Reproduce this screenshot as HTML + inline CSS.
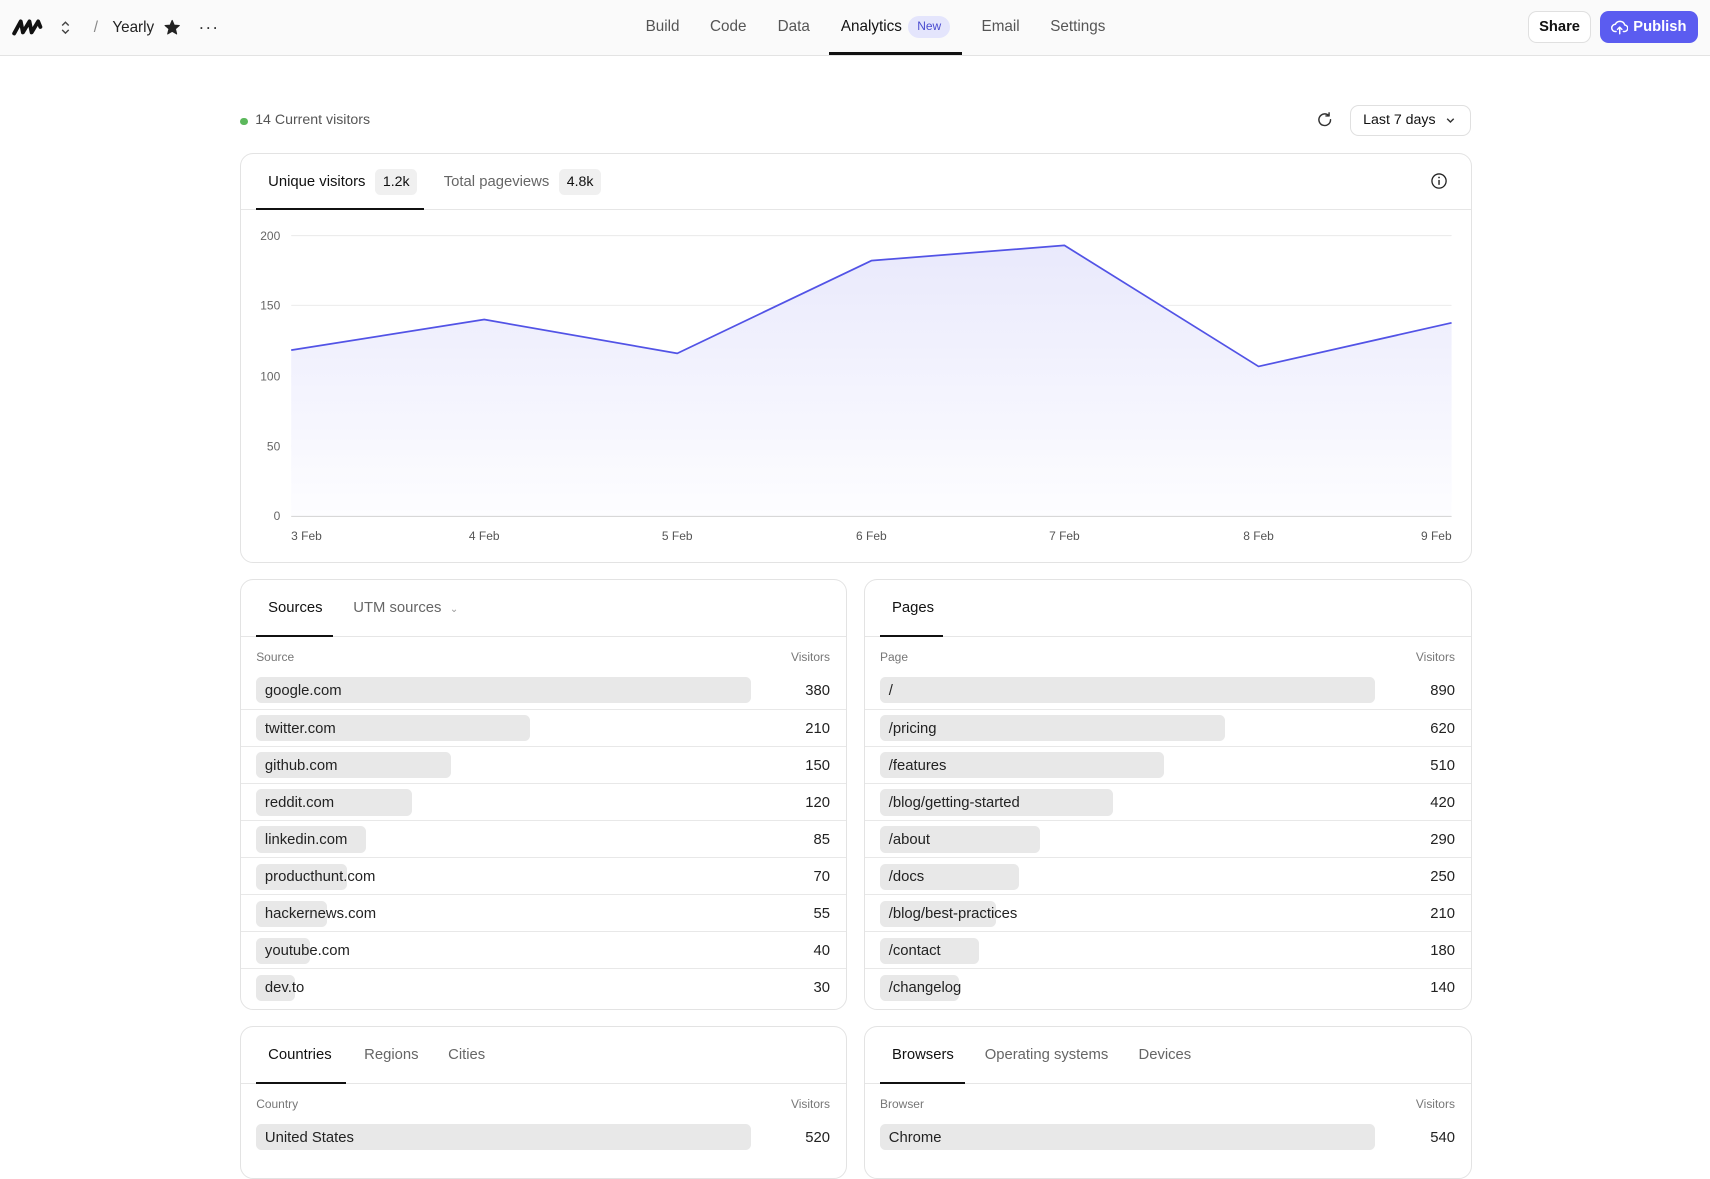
<!DOCTYPE html>
<html><head><meta charset="utf-8"><style>
html{zoom:1.0906}
*{box-sizing:border-box;margin:0;padding:0}
body{width:1568px;height:1057px;overflow:hidden;background:#fff;font-family:"Liberation Sans",sans-serif;color:#1a1a1a;position:relative}
.abs{position:absolute}
.hdr{position:absolute;left:0;top:0;width:1568px;height:51px;background:#fafafa;border-bottom:1px solid #e3e3e3}
.nav{position:absolute;top:0;height:50px;line-height:49px;font-size:14px;color:#555;white-space:nowrap}
.btn{position:absolute;top:10px;height:29px;border-radius:8px;font-size:13.5px;font-weight:bold;line-height:25px;padding-top:2px;text-align:center}
.card{position:absolute;border:1px solid #e3e3e3;border-radius:12px;background:#fff;overflow:hidden}
.tabs{position:relative;height:52px;border-bottom:1px solid #e6e6e6}
.tab{position:absolute;top:0;height:52px;line-height:52px;font-size:13.6px;color:#666;white-space:nowrap}
.tab.act{color:#111}
.ul{position:absolute;bottom:-1px;height:2px;background:#111}
.lbl{position:absolute;font-size:11px;color:#777}
.row{position:absolute;left:0;right:0;height:34px;border-top:1px solid #e8e8e8}
.row:first-of-type{border-top:none}
.bar{position:absolute;left:14px;top:5px;height:24px;background:#e8e8e8;border-radius:5px}
.rt{position:absolute;left:22px;top:1px;line-height:34px;font-size:13.6px;color:#222;white-space:nowrap}
.rv{position:absolute;right:15px;top:1px;line-height:34px;font-size:13.6px;color:#222}
.badge{display:inline-block;background:#f0f0f0;border-radius:5px;padding:0 7px;height:24px;line-height:24px;font-size:13px;color:#111;margin-left:9px}
</style></head><body>

<div class="hdr"></div>
<svg class="abs" style="left:11px;top:15px" width="28" height="20" viewBox="0 0 28 20"><path d="M2 16 L8 5 L10 15 L16 5 L18 15 L24 5 L26 10" fill="none" stroke="#111" stroke-width="3.6" stroke-linejoin="round" stroke-linecap="round"/></svg>
<svg class="abs" style="left:55px;top:17px" width="10" height="16" viewBox="0 0 10 16"><path d="M2 6 L5 3 L8 6 M2 10 L5 13 L8 10" fill="none" stroke="#444" stroke-width="1.3"/></svg>
<div class="abs" style="left:86px;top:17px;font-size:14px;color:#888">/</div>
<div class="abs" style="left:103px;top:17px;font-size:14px;color:#222">Yearly</div>
<svg class="abs" style="left:150px;top:17px" width="15" height="15" viewBox="0 0 24 24"><path d="M12 2 L15 9 L22.5 9.5 L16.8 14.5 L18.6 22 L12 18 L5.4 22 L7.2 14.5 L1.5 9.5 L9 9 Z" fill="#222" stroke="#222" stroke-linejoin="round" stroke-width="1.5"/></svg>
<div class="abs" style="left:182px;top:16px;font-size:16px;color:#333;letter-spacing:1px">···</div>

<div class="nav" style="left:592px">Build</div>
<div class="nav" style="left:651px">Code</div>
<div class="nav" style="left:713px">Data</div>
<div class="nav" style="left:771px;color:#111">Analytics</div>
<div class="abs" style="left:833px;top:15px;height:20px;width:38px;border-radius:10px;background:#e4e5fc;color:#4a4cd0;font-size:11px;line-height:20px;text-align:center">New</div>
<div class="abs" style="left:760px;top:48px;width:122px;height:2px;background:#111"></div>
<div class="nav" style="left:900px">Email</div>
<div class="nav" style="left:963px">Settings</div>

<div class="btn" style="left:1401px;width:58px;background:#fff;border:1px solid #e0e0e0;color:#111">Share</div>
<div class="btn" style="left:1467px;width:90px;background:#5b5cf0;color:#fff;padding-left:20px;line-height:27px">Publish</div>
<svg class="abs" style="left:1477px;top:17px" width="16" height="15" viewBox="0 0 24 22"><path d="M7 17 H6 A5 5 0 0 1 6 7 A7 7 0 0 1 19 8 A4.5 4.5 0 0 1 18 17 H17 M12 20 V11 M9 14 L12 11 L15 14" fill="none" stroke="#fff" stroke-width="2" stroke-linecap="round" stroke-linejoin="round"/></svg>

<div class="abs" style="left:220px;top:108px;width:7px;height:7px;border-radius:50%;background:#5cb85c"></div>
<div class="abs" style="left:234px;top:103px;font-size:13px;color:#555">14 Current visitors</div>
<svg class="abs" style="left:1207px;top:102px" width="16" height="16" viewBox="0 0 24 24"><path d="M20 12 A8 8 0 1 1 17.5 6.2 M18 2.5 V6.8 H13.7" fill="none" stroke="#333" stroke-width="2" stroke-linecap="round" stroke-linejoin="round"/></svg>
<div class="abs" style="left:1238px;top:96px;width:111px;height:29px;border:1px solid #e0e0e0;border-radius:8px;font-size:13px;line-height:27px;padding-left:11px;color:#111">Last 7 days</div>
<svg class="abs" style="left:1325px;top:106px" width="10" height="8" viewBox="0 0 10 8"><path d="M2 2.5 L5 5.5 L8 2.5" fill="none" stroke="#333" stroke-width="1.3"/></svg>

<div class="card" style="left:220px;top:140px;width:1130px;height:376px">
 <div class="tabs">
  <div class="tab act" style="left:25px">Unique visitors<span class="badge">1.2k</span></div>
  <div class="tab" style="left:186px">Total pageviews<span class="badge">4.8k</span></div>
  <div class="ul" style="left:14px;width:154px"></div>
 </div>
</div>
<svg class="abs" style="left:0;top:0" width="1568" height="1057" viewBox="0 0 1568 1057">
 <defs><linearGradient id="g" x1="0" y1="0" x2="0" y2="1"><stop offset="0" stop-color="#e9e9fc"/><stop offset="1" stop-color="#fdfdff"/></linearGradient></defs>
 <g stroke="#ececec" stroke-width="1">
  <line x1="267" y1="216" x2="1331" y2="216"/><line x1="267" y1="280" x2="1331" y2="280"/><line x1="267" y1="345" x2="1331" y2="345"/><line x1="267" y1="409" x2="1331" y2="409"/>
 </g>
 <path d="M267 321 L444 293 L621 324 L799 239 L976 225 L1154 336 L1331 296 L1331 473 L267 473 Z" fill="url(#g)"/>
 <line x1="267" y1="473.5" x2="1331" y2="473.5" stroke="#d8d8d8"/>
 <path d="M267 321 L444 293 L621 324 L799 239 L976 225 L1154 336 L1331 296" fill="none" stroke="#5253e6" stroke-width="1.6" stroke-linejoin="round"/>
 <g font-family="Liberation Sans, sans-serif" font-size="11" fill="#666" text-anchor="end">
  <text x="257" y="220">200</text><text x="257" y="284">150</text><text x="257" y="349">100</text><text x="257" y="413">50</text><text x="257" y="477">0</text>
 </g>
 <g font-family="Liberation Sans, sans-serif" font-size="11" fill="#555" text-anchor="middle">
  <text x="281" y="495">3 Feb</text><text x="444" y="495">4 Feb</text><text x="621" y="495">5 Feb</text><text x="799" y="495">6 Feb</text><text x="976" y="495">7 Feb</text><text x="1154" y="495">8 Feb</text><text x="1317" y="495">9 Feb</text>
 </g>
 <g fill="none" stroke="#222" stroke-width="1.2">
  <circle cx="1319.5" cy="166" r="6.5"/><circle cx="747" cy="557.5" r="6.5"/><circle cx="1319.5" cy="557.5" r="6.5"/><circle cx="747" cy="967.5" r="6.5"/><circle cx="1319.5" cy="967.5" r="6.5"/>
 </g>
 <g stroke="#222" stroke-width="1.3">
  <line x1="1319.5" y1="165" x2="1319.5" y2="169.5"/><line x1="747" y1="556.5" x2="747" y2="561"/><line x1="1319.5" y1="556.5" x2="1319.5" y2="561"/><line x1="747" y1="966.5" x2="747" y2="971"/><line x1="1319.5" y1="966.5" x2="1319.5" y2="971"/>
 </g>
 <g fill="#222"><circle cx="1319.5" cy="162.8" r=".8"/><circle cx="747" cy="554.3" r=".8"/><circle cx="1319.5" cy="554.3" r=".8"/><circle cx="747" cy="964.3" r=".8"/><circle cx="1319.5" cy="964.3" r=".8"/></g>
</svg>

<div class="card" style="left:220px;top:531px;width:557px;height:395px">
 <div class="tabs">
  <div class="tab act" style="left:25px">Sources</div>
  <div class="tab" style="left:103px">UTM sources <span style="font-size:9px;color:#999;margin-left:4px">⌄</span></div>
  <div class="ul" style="left:14px;width:70px"></div>
 </div>
 <div class="lbl" style="left:14px;top:64px">Source</div><div class="lbl" style="right:15px;top:64px">Visitors</div>
 <div style="position:absolute;left:0;right:0;top:84px;bottom:0">
  <div class="row" style="top:0"><div class="bar" style="width:454px"></div><div class="rt">google.com</div><div class="rv">380</div></div>
  <div class="row" style="top:34px"><div class="bar" style="width:251px"></div><div class="rt">twitter.com</div><div class="rv">210</div></div>
  <div class="row" style="top:68px"><div class="bar" style="width:179px"></div><div class="rt">github.com</div><div class="rv">150</div></div>
  <div class="row" style="top:102px"><div class="bar" style="width:143px"></div><div class="rt">reddit.com</div><div class="rv">120</div></div>
  <div class="row" style="top:136px"><div class="bar" style="width:101px"></div><div class="rt">linkedin.com</div><div class="rv">85</div></div>
  <div class="row" style="top:170px"><div class="bar" style="width:83px"></div><div class="rt">producthunt.com</div><div class="rv">70</div></div>
  <div class="row" style="top:204px"><div class="bar" style="width:65px"></div><div class="rt">hackernews.com</div><div class="rv">55</div></div>
  <div class="row" style="top:238px"><div class="bar" style="width:49px"></div><div class="rt">youtube.com</div><div class="rv">40</div></div>
  <div class="row" style="top:272px"><div class="bar" style="width:36px"></div><div class="rt">dev.to</div><div class="rv">30</div></div>
 </div>
</div>

<div class="card" style="left:792px;top:531px;width:558px;height:395px">
 <div class="tabs">
  <div class="tab act" style="left:25px">Pages</div>
  <div class="ul" style="left:14px;width:58px"></div>
 </div>
 <div class="lbl" style="left:14px;top:64px">Page</div><div class="lbl" style="right:15px;top:64px">Visitors</div>
 <div style="position:absolute;left:0;right:0;top:84px;bottom:0">
  <div class="row" style="top:0"><div class="bar" style="width:454px"></div><div class="rt">/</div><div class="rv">890</div></div>
  <div class="row" style="top:34px"><div class="bar" style="width:316px"></div><div class="rt">/pricing</div><div class="rv">620</div></div>
  <div class="row" style="top:68px"><div class="bar" style="width:260px"></div><div class="rt">/features</div><div class="rv">510</div></div>
  <div class="row" style="top:102px"><div class="bar" style="width:214px"></div><div class="rt">/blog/getting-started</div><div class="rv">420</div></div>
  <div class="row" style="top:136px"><div class="bar" style="width:147px"></div><div class="rt">/about</div><div class="rv">290</div></div>
  <div class="row" style="top:170px"><div class="bar" style="width:127px"></div><div class="rt">/docs</div><div class="rv">250</div></div>
  <div class="row" style="top:204px"><div class="bar" style="width:106px"></div><div class="rt">/blog/best-practices</div><div class="rv">210</div></div>
  <div class="row" style="top:238px"><div class="bar" style="width:91px"></div><div class="rt">/contact</div><div class="rv">180</div></div>
  <div class="row" style="top:272px"><div class="bar" style="width:72px"></div><div class="rt">/changelog</div><div class="rv">140</div></div>
 </div>
</div>

<div class="card" style="left:220px;top:941px;width:557px;height:140px">
 <div class="tabs">
  <div class="tab act" style="left:25px">Countries</div>
  <div class="tab" style="left:113px">Regions</div>
  <div class="tab" style="left:190px">Cities</div>
  <div class="ul" style="left:14px;width:82px"></div>
 </div>
 <div class="lbl" style="left:14px;top:64px">Country</div><div class="lbl" style="right:15px;top:64px">Visitors</div>
 <div style="position:absolute;left:0;right:0;top:84px;bottom:0">
  <div class="row" style="top:0"><div class="bar" style="width:454px"></div><div class="rt">United States</div><div class="rv">520</div></div>
 </div>
</div>

<div class="card" style="left:792px;top:941px;width:558px;height:140px">
 <div class="tabs">
  <div class="tab act" style="left:25px">Browsers</div>
  <div class="tab" style="left:110px">Operating systems</div>
  <div class="tab" style="left:251px">Devices</div>
  <div class="ul" style="left:14px;width:78px"></div>
 </div>
 <div class="lbl" style="left:14px;top:64px">Browser</div><div class="lbl" style="right:15px;top:64px">Visitors</div>
 <div style="position:absolute;left:0;right:0;top:84px;bottom:0">
  <div class="row" style="top:0"><div class="bar" style="width:454px"></div><div class="rt">Chrome</div><div class="rv">540</div></div>
 </div>
</div>

</body></html>
